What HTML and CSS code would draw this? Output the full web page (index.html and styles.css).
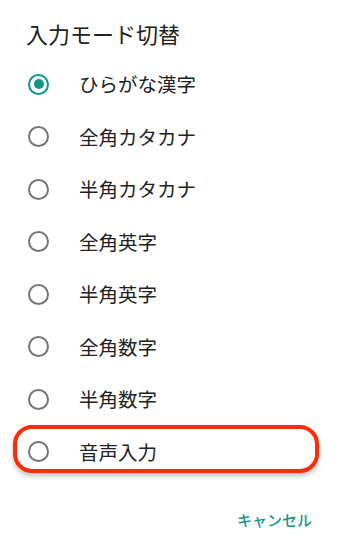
FILE: index.html
```html
<!DOCTYPE html>
<html lang="ja">
<head>
<meta charset="utf-8">
<title>入力モード切替</title>
<link rel="stylesheet" href="styles.css">
</head>
<body>
<div class="dialog">
  <div class="title">入力モード切替</div>
  <ul class="options">
    <li class="option checked"><span class="radio"></span><span class="label">ひらがな漢字</span></li>
    <li class="option"><span class="radio"></span><span class="label">全角カタカナ</span></li>
    <li class="option"><span class="radio"></span><span class="label">半角カタカナ</span></li>
    <li class="option"><span class="radio"></span><span class="label">全角英字</span></li>
    <li class="option"><span class="radio"></span><span class="label">半角英字</span></li>
    <li class="option"><span class="radio"></span><span class="label">全角数字</span></li>
    <li class="option"><span class="radio"></span><span class="label">半角数字</span></li>
    <li class="option highlighted"><span class="radio"></span><span class="label">音声入力</span></li>
  </ul>
  <div class="actions"><span class="button">キャンセル</span></div>
</div>
</body>
</html>
```
FILE: styles.css
```css
html, body {
  margin: 0;
  padding: 0;
  background: #ffffff;
}
body {
  font-family: "Noto Sans CJK JP", "Noto Sans", Roboto, sans-serif;
  color: #212121;
}
.dialog {
  width: 340px;
  height: 550px;
  display: flex;
  flex-direction: column;
}
.title {
  padding: 19px 0 0 26px;
  height: 28px;
  line-height: 28px;
  font-size: 22px;
  margin-bottom: 11px;
}
.options {
  list-style: none;
  margin: 0;
  padding: 0;
}
.option {
  position: relative;
  height: 52.5px;
  display: flex;
  align-items: center;
  padding-left: 28px;
}
.radio {
  box-sizing: border-box;
  width: 21px;
  height: 21px;
  border: 2px solid #757575;
  border-radius: 50%;
  display: flex;
  align-items: center;
  justify-content: center;
  flex: none;
}
.option.checked .radio {
  border-color: #0f9688;
}
.option.checked .radio::after {
  content: "";
  width: 10px;
  height: 10px;
  border-radius: 50%;
  background: #0f9688;
}
.label {
  margin-left: 30px;
  font-size: 19.5px;
  line-height: 24px;
}
.option.highlighted::before {
  content: "";
  position: absolute;
  left: 13px;
  top: -0.5px;
  width: 306px;
  height: 48px;
  box-sizing: border-box;
  border: 4.5px solid #ff2a0a;
  border-radius: 19px;
  box-shadow: 0 3px 5px rgba(0, 0, 0, 0.25);
}
.actions {
  display: flex;
  justify-content: flex-end;
  padding-right: 28px;
  margin-top: 32px;
}
.button {
  font-size: 15px;
  line-height: 20px;
  font-weight: 500;
  color: #11978a;
}
```
